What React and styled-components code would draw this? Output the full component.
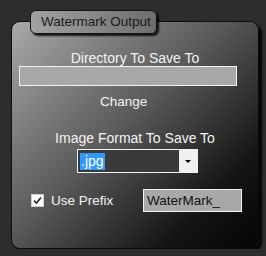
import React from 'react';
import styled, { createGlobalStyle } from 'styled-components';

const GlobalStyle = createGlobalStyle`
  html, body {
    margin: 0;
    padding: 0;
    background: #2d2d2d;
    font-family: "Liberation Sans", Arial, sans-serif;
  }
`;

const Frame = styled.div`
  display: flex;
  flex-direction: column;
  padding: 10px 0 0 11px;
`;

const Tab = styled.div`
  position: relative;
  z-index: 1;
  box-sizing: border-box;
  width: 127px;
  height: 24px;
  margin: 0 0 -13px 19px;
  padding: 3px 0 0 10px;
  border: 1px solid #111;
  border-radius: 6px;
  background: linear-gradient(90deg, #a2a2a2, #6e6e6e);
  box-shadow: 2px 2px 2px rgba(0, 0, 0, 0.85);
  color: #1a1a1a;
  font-size: 13.5px;
  line-height: 16px;
`;

const Panel = styled.div`
  box-sizing: border-box;
  width: 248px;
  height: 228px;
  display: flex;
  flex-direction: column;
  padding-top: 28px;
  border: 1px solid #0c0c0c;
  border-radius: 9px;
  background: linear-gradient(135deg, #a9a9a9 0%, #5a5a5a 45%, #141414 80%, #050505 100%);
  box-shadow: 3px 3px 2px rgba(0, 0, 0, 0.9);
`;

const Label = styled.div`
  color: #f4f4f4;
  font-size: ${(p) => p.$size || 14}px;
  line-height: 16px;
  text-align: ${(p) => (p.$left ? 'left' : 'center')};
  margin-top: ${(p) => p.$top || 0}px;
  padding-left: ${(p) => p.$indent || 0}px;
`;

const Field = styled.div`
  box-sizing: border-box;
  width: ${(p) => p.$width}px;
  height: ${(p) => p.$height}px;
  margin-left: ${(p) => p.$indent || 0}px;
  padding: 2px 3px;
  border: 1px solid #f2f2f2;
  background: #a8a8a8;
  color: #111;
  font-size: 13.5px;
  line-height: 17px;
`;

const Select = styled.div`
  box-sizing: border-box;
  display: flex;
  width: 121px;
  height: 24px;
  margin: 3px 0 0 65px;
  border: 1px solid #f2f2f2;
  background: #3a3a3a;
`;

const Value = styled.div`
  flex: 1;
  display: flex;
  align-items: center;
  padding-left: 2px;
`;

const Highlight = styled.span`
  background: #3399ff;
  color: #fff;
  font-size: 14px;
  line-height: 17px;
  padding: 0 1px;
`;

const DropButton = styled.div`
  width: 18px;
  display: flex;
  align-items: center;
  justify-content: center;
  background: #f0f0f0;
`;

const Arrow = styled.div`
  width: 0;
  height: 0;
  border-left: 3px solid transparent;
  border-right: 3px solid transparent;
  border-top: 3px solid #000;
`;

const Row = styled.div`
  display: flex;
  align-items: center;
  margin-top: 16px;
  padding-left: 19px;
`;

const Check = styled.div`
  box-sizing: border-box;
  width: 13px;
  height: 13px;
  display: flex;
  align-items: center;
  justify-content: center;
  border: 1px solid #d0d0d0;
  background: #fff;
`;

const CheckText = styled.div`
  color: #f4f4f4;
  font-size: 13.5px;
  line-height: 16px;
  margin-left: 7px;
  width: 92px;
`;

export default function App() {
  return (
    <>
      <GlobalStyle />
      <Frame>
        <Tab>Watermark Output</Tab>
        <Panel>
          <Label>Directory To Save To</Label>
          <Field $width={218} $height={20} $indent={7} />
          <Label $left $top={8} $indent={88} $size={13.5}>Change</Label>
          <Label $top={20}>Image Format To Save To</Label>
          <Select>
            <Value>
              <Highlight>.jpg</Highlight>
            </Value>
            <DropButton>
              <Arrow />
            </DropButton>
          </Select>
          <Row>
            <Check>
              <svg width="9" height="9" viewBox="0 0 9 9">
                <path d="M1 4.5 L3.5 7 L8 1.5" fill="none" stroke="#222" strokeWidth="1.6" />
              </svg>
            </Check>
            <CheckText>Use Prefix</CheckText>
            <Field $width={99} $height={23}>WaterMark_</Field>
          </Row>
        </Panel>
      </Frame>
    </>
  );
}
